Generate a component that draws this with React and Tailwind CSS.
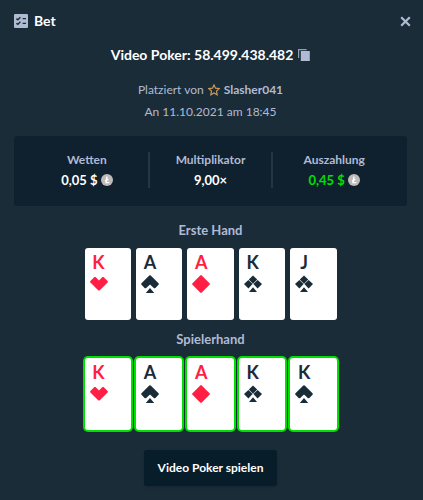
const firstHand = [
  { rank: 'K', suit: 'hearts' },
  { rank: 'A', suit: 'spades' },
  { rank: 'A', suit: 'diamonds' },
  { rank: 'K', suit: 'clubs' },
  { rank: 'J', suit: 'clubs' },
];

const playerHand = [
  { rank: 'K', suit: 'hearts' },
  { rank: 'A', suit: 'spades' },
  { rank: 'A', suit: 'diamonds' },
  { rank: 'K', suit: 'clubs' },
  { rank: 'K', suit: 'spades' },
];

const suitPaths = {
  hearts: 'M0.4 6 L4.2 2.2 Q5 1.4 5.8 2.2 L9 5.4 L12.2 2.2 Q13 1.4 13.8 2.2 L17.6 6 Q18.2 6.8 17.6 7.6 L9.8 15.2 Q9 16 8.2 15.2 L0.4 7.6 Q-0.2 6.8 0.4 6 Z',
  spades: 'M8.3 0.6 Q9 -0.1 9.7 0.6 L17.5 8.2 Q18.2 9 17.5 9.8 L14.4 12.9 Q13.6 13.7 12.8 12.9 L9 9.4 L5.2 12.9 Q4.4 13.7 3.6 12.9 L0.5 9.8 Q-0.2 9 0.5 8.2 Z M9 13 L13.2 18 L4.8 18 Z',
  diamonds: 'M8.2 0.5 Q9 -0.3 9.8 0.5 L17.5 8.2 Q18.3 9 17.5 9.8 L9.8 17.5 Q9 18.3 8.2 17.5 L0.5 9.8 Q-0.3 9 0.5 8.2 Z',
  clubs: 'M9 0.4 L13.2 4.5 L9 8.7 L4.8 4.5 Z M4.4 4.9 L8.6 9.1 L4.4 13.5 L0 9.1 Z M13.6 4.9 L18 9.1 L13.6 13.5 L9.4 9.1 Z M9 12.2 L13 17 L5 17 Z',
};

function Card({ rank, suit, held }) {
  const red = suit === 'hearts' || suit === 'diamonds';
  return (
    <li
      className={`
        h-[72px] flex-1 rounded-[3px] bg-white px-[5px] pt-1
        ${red ? 'text-[#ff1f44]' : 'text-[#1a2c38]'}
        ${held ? 'ring-2 ring-[#00e000]' : ''}
      `}
    >
      <div className="flex w-[18px] flex-col items-center">
        <span className="text-lg leading-5 font-bold">{rank}</span>
        <svg className="mt-[3px] h-[18px] w-[18px]" viewBox="0 0 18 18" fill="currentColor" aria-hidden="true">
          <path d={suitPaths[suit]} />
        </svg>
      </div>
    </li>
  );
}

function Hand({ title, cards, held }) {
  return (
    <section className="flex flex-col items-center">
      <h3 className="text-[13px] leading-5 font-bold">{title}</h3>
      <ul className={`flex w-full max-w-[252px] gap-[5px] ${held ? 'mt-[9px]' : 'mt-2'}`}>
        {cards.map((card, i) => (
          <Card key={i} rank={card.rank} suit={card.suit} held={held} />
        ))}
      </ul>
    </section>
  );
}

function CoinIcon() {
  return (
    <svg className="h-3 w-3" viewBox="0 0 12 12" aria-hidden="true">
      <circle cx="6" cy="6" r="6" fill="#bfbbbb" />
      <path d="M6 2.6 L5 8.6 H8.2 M4 6.8 L7.4 5.4" fill="none" stroke="#fff" strokeWidth="1.4" />
    </svg>
  );
}

function Stat({ label, children }) {
  return (
    <div className="flex flex-1 flex-col items-center">
      <dt className="text-xs leading-5">{label}</dt>
      <dd className="flex items-center gap-[3px] text-[13px] leading-5 text-white">{children}</dd>
    </div>
  );
}

function App() {
  return (
    <div className="min-h-screen bg-[#1a2c38] pr-4 pb-3 pl-[14px] font-['Lato','Open_Sans',sans-serif] text-[#b1bad3]">
      <header className="flex items-center justify-between pt-[11px]">
        <h1 className="flex items-center gap-[6px] text-sm leading-5 font-bold text-white">
          <svg className="h-[14px] w-[14px]" viewBox="0 0 14 14" fill="none" aria-hidden="true">
            <rect width="14" height="14" rx="1" fill="#b1bad3" />
            <path d="M2.4 4.6 L3.8 5.8 L6.4 3.2 M2.4 9.2 L3.8 10.4 L6.4 7.8 M8.6 4.6 H12 M8.6 9.4 H12" stroke="#1a2c38" strokeWidth="1.4" />
          </svg>
          Bet
        </h1>
        <button type="button" aria-label="Schließen" className="-mr-[6px] flex h-5 items-center">
          <svg className="h-[15px] w-[15px]" viewBox="0 0 15 15" aria-hidden="true">
            <path d="M3.2 3.2 L11.8 11.8 M11.8 3.2 L3.2 11.8" stroke="#b1bad3" strokeWidth="2.2" />
          </svg>
        </button>
      </header>

      <div className="mt-[14px] flex items-center justify-center gap-[5px]">
        <h2 className="text-sm leading-5 font-bold text-white">Video Poker: 58.499.438.482</h2>
        <button type="button" aria-label="Kopieren">
          <svg className="h-3 w-3" viewBox="0 0 12 12" fill="#b1bad3" aria-hidden="true">
            <path d="M0 0 H8.6 V1.2 H1.2 V9 H0 Z" opacity="0.8" />
            <rect x="2.8" y="2" width="9" height="10" />
          </svg>
        </button>
      </div>

      <div className="mt-[15px] flex flex-col items-center gap-[2px] text-xs leading-5">
        <p className="flex items-center gap-1">
          Platziert von
          <svg className="h-3 w-3" viewBox="0 0 12 12" fill="none" stroke="#c69759" strokeWidth="1.2" aria-hidden="true">
            <path d="M6 0.9 L7.5 4.2 L11.2 4.6 L8.5 7 L9.2 10.8 L6 8.9 L2.8 10.8 L3.5 7 L0.8 4.6 L4.5 4.2 Z" />
          </svg>
          <a href="#user" className="font-bold">Slasher041</a>
        </p>
        <p>An 11.10.2021 am 18:45</p>
      </div>

      <dl className="mt-[14px] flex items-center rounded-[3px] bg-[#0f212e] px-3 pt-[14px] pb-4 font-bold">
        <Stat label="Wetten">
          0,05 $ <CoinIcon />
        </Stat>
        <div className="h-9 w-[2px] bg-[#213743]" />
        <Stat label="Multiplikator">9,00×</Stat>
        <div className="h-9 w-[2px] bg-[#213743]" />
        <Stat label="Auszahlung">
          <span className="text-[#00e000]">0,45 $</span> <CoinIcon />
        </Stat>
      </dl>

      <div className="mt-[14px] flex flex-col gap-[9px]">
        <Hand title="Erste Hand" cards={firstHand} />
        <Hand title="Spielerhand" cards={playerHand} held />
      </div>

      <div className="mt-5 flex justify-center">
        <button type="button" className="rounded-[3px] bg-[#071d2a] px-[14px] py-2 text-xs leading-5 font-bold text-white shadow-sm">
          Video Poker spielen
        </button>
      </div>
    </div>
  );
}

export default App;
